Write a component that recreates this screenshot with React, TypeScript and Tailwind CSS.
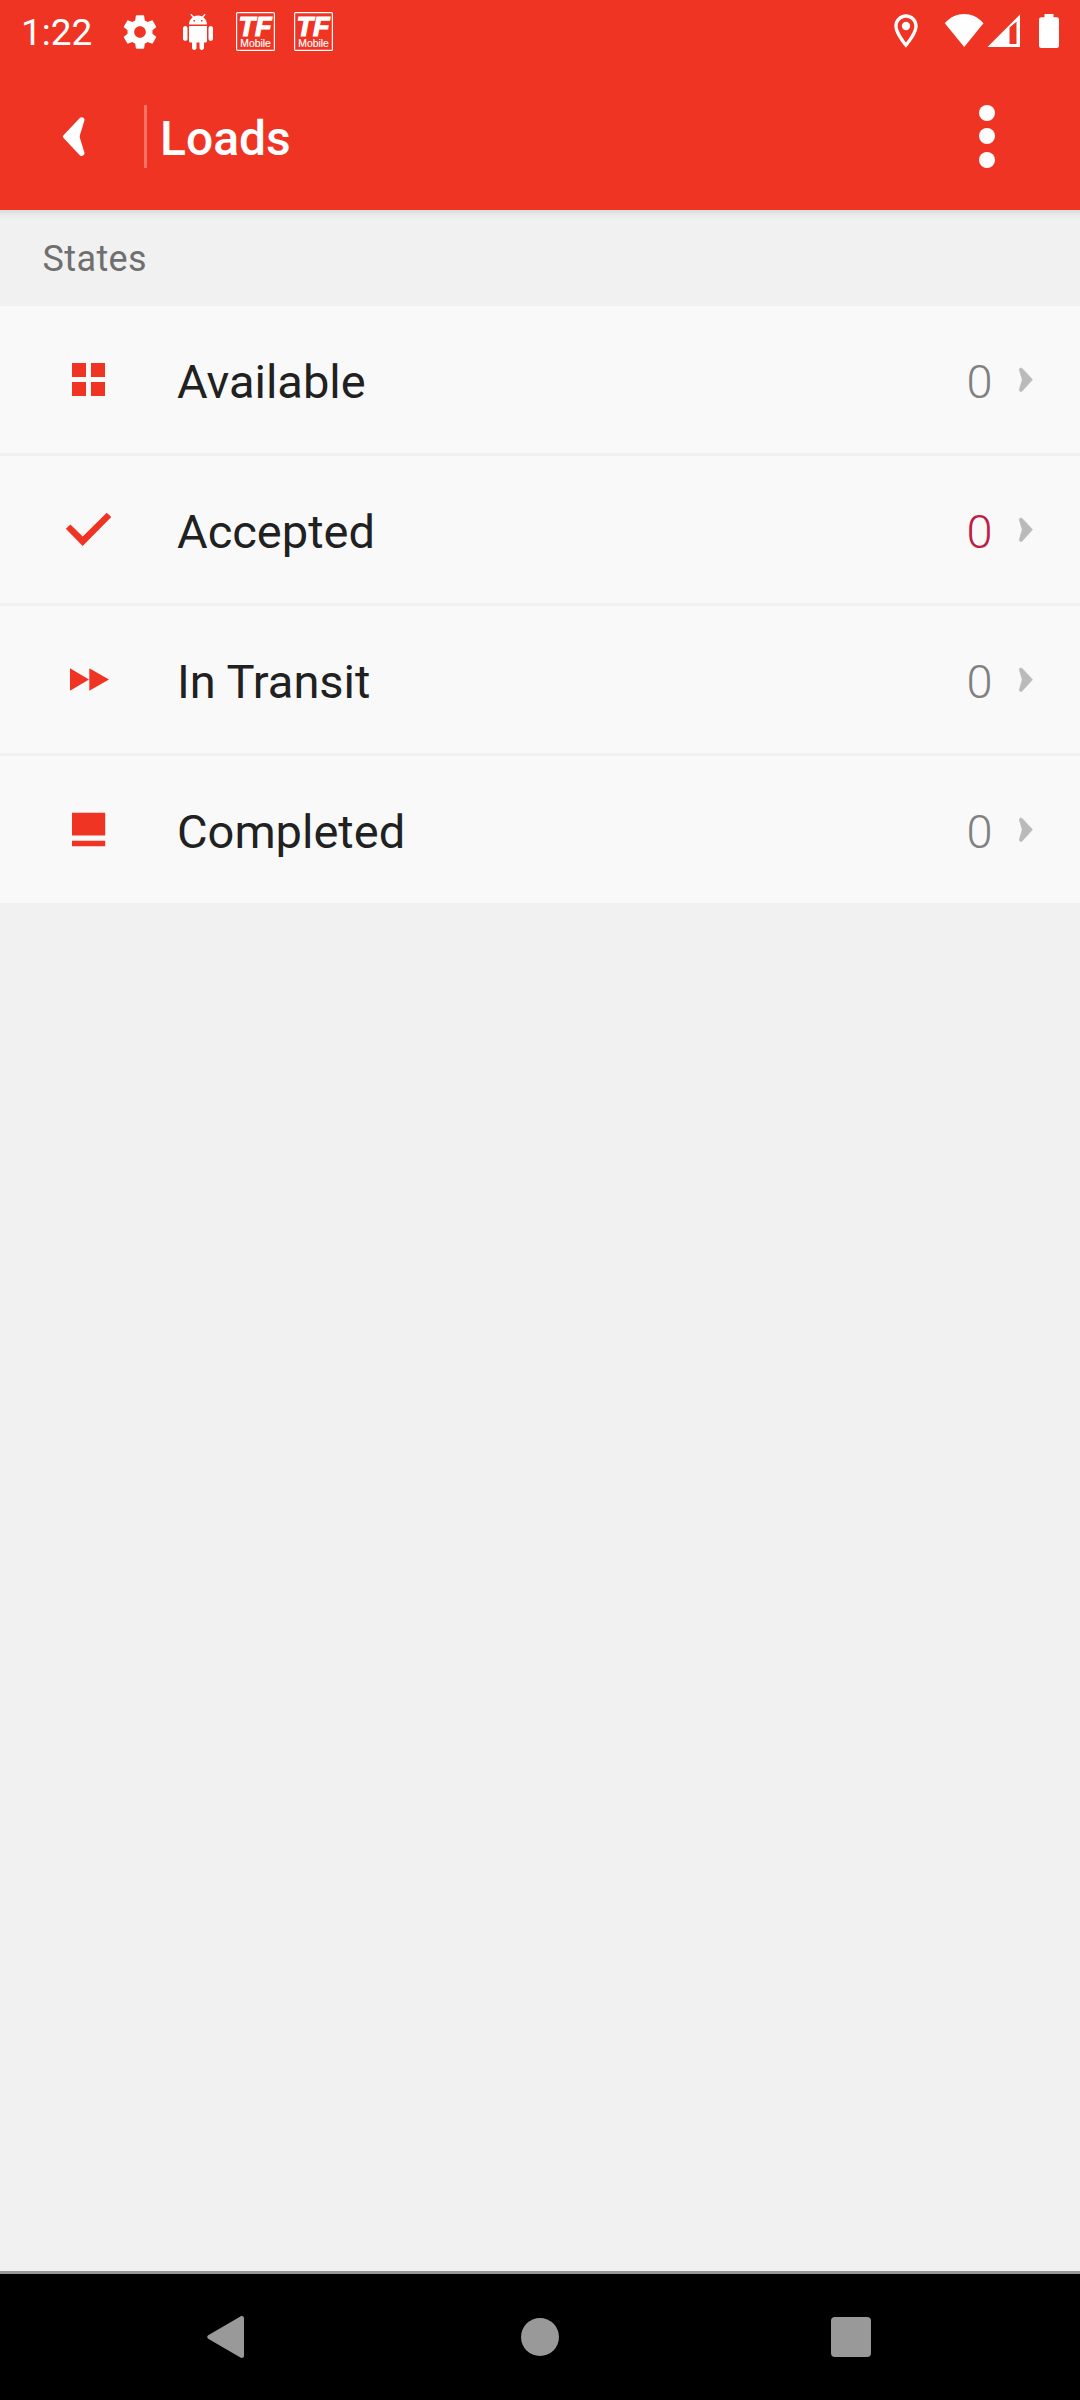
import React from "react";

function StatusBar() {
  return (
    <div className="flex h-[63px] w-full items-start text-white">
      <span className="ml-[21px] mt-[11px] w-[99px] text-[37px] leading-[44px]">1:22</span>
      <svg className="mt-[11.5px] h-[40px] w-[40px] shrink-0" viewBox="0 0 24 24" fill="currentColor">
        <path d="M19.43 12.98c.04-.32.07-.64.07-.98s-.03-.66-.07-.98l2.11-1.65c.19-.15.24-.42.12-.64l-2-3.46c-.12-.22-.39-.3-.61-.22l-2.49 1c-.52-.4-1.08-.73-1.69-.98l-.38-2.65C14.46 2.18 14.25 2 14 2h-4c-.25 0-.46.18-.49.42l-.38 2.65c-.61.25-1.17.59-1.69.98l-2.49-1c-.23-.09-.49 0-.61.22l-2 3.46c-.13.22-.07.49.12.64l2.11 1.65c-.04.32-.07.65-.07.98s.03.66.07.98l-2.11 1.65c-.19.15-.24.42-.12.64l2 3.46c.12.22.39.3.61.22l2.49-1c.52.4 1.08.73 1.69.98l.38 2.65c.03.24.24.42.49.42h4c.25 0 .46-.18.49-.42l.38-2.65c.61-.25 1.17-.59 1.69-.98l2.49 1c.23.09.49 0 .61-.22l2-3.46c.12-.22.07-.49-.12-.64l-2.11-1.65zM12 15.5c-1.93 0-3.5-1.57-3.5-3.5s1.57-3.5 3.5-3.5 3.5 1.57 3.5 3.5-1.57 3.5-3.5 3.5z" />
      </svg>
      <svg className="ml-[20px] mt-[13.5px] h-[36px] w-[36px] shrink-0" viewBox="0 0 24 24" fill="currentColor">
        <path d="M6 18c0 .55.45 1 1 1h1v3.5c0 .83.67 1.5 1.5 1.5s1.5-.67 1.5-1.5V19h2v3.5c0 .83.67 1.5 1.5 1.5s1.5-.67 1.5-1.5V19h1c.55 0 1-.45 1-1V8H6v10zM3.5 8C2.67 8 2 8.67 2 9.5v7c0 .83.67 1.5 1.5 1.5S5 17.33 5 16.5v-7C5 8.67 4.33 8 3.5 8zm17 0c-.83 0-1.5.67-1.5 1.5v7c0 .83.67 1.5 1.5 1.5s1.5-.67 1.5-1.5v-7c0-.83-.67-1.5-1.5-1.5zm-4.97-5.84l1.3-1.3c.2-.2.2-.51 0-.71-.2-.2-.51-.2-.71 0l-1.48 1.48C13.85 1.23 12.95 1 12 1c-.96 0-1.86.23-2.66.63L7.85.15c-.2-.2-.51-.2-.71 0-.2.2-.2.51 0 .71l1.31 1.31C6.97 3.26 6 5.01 6 7h12c0-1.99-.97-3.75-2.47-4.84zM10 5H9V4h1v1zm5 0h-1V4h1v1z" />
      </svg>
      <TfLogo className="ml-[20px]" />
      <TfLogo className="ml-[19px]" />
      <svg className="ml-auto mr-[18px] mt-[11px] h-[40px] w-[40px] shrink-0" viewBox="0 0 24 24" fill="currentColor">
        <path d="M12 2C8.13 2 5 5.13 5 9c0 5.25 7 13 7 13s7-7.75 7-13c0-3.87-3.13-7-7-7zM7 9c0-2.76 2.24-5 5-5s5 2.24 5 5c0 2.88-2.88 7.19-5 9.88C9.92 16.21 7 11.85 7 9z" />
        <circle cx="12" cy="9" r="2.5" />
      </svg>
      <svg className="mr-[3px] mt-[14px] h-[33px] w-[40px] shrink-0" viewBox="0 0 40 33" fill="currentColor">
        <path d="M.8 9.2C6.2 3 13 0 20.2 0s13.800 3 19.300 9.200L20.200 33z" />
      </svg>
      <svg className="mr-[19px] mt-[14px] h-[33px] w-[33px] shrink-0" viewBox="0 0 33 33" fill="currentColor" fillRule="evenodd">
        <path d="M33 .5V33H.5zM22.500 13.500V30h7V7.800z" />
      </svg>
      <svg className="mr-[21px] mt-[14px] h-[34px] w-[20px] shrink-0" viewBox="0 0 20 34" fill="currentColor">
        <path d="M5.500 0h9v3.300h3.200A2.300 2.300 0 0 1 20 5.600v26.100a2.300 2.300 0 0 1-2.300 2.300H2.300A2.300 2.300 0 0 1 0 31.700V5.600a2.300 2.300 0 0 1 2.300-2.300h3.200z" />
      </svg>
    </div>
  );
}

function TfLogo({ className }: { className: string }) {
  return (
    <svg className={`mt-[12px] h-[39px] w-[39px] shrink-0 ${className}`} viewBox="0 0 39 39" fill="white">
      <rect x=".6" y=".6" width="37.800" height="37.800" rx="1" fill="none" stroke="white" strokeWidth="1.200" />
      <text x="2.500" y="24.100" textLength="33" lengthAdjust="spacingAndGlyphs" fontFamily="Liberation Sans" fontWeight="700" fontStyle="italic" fontSize="28" stroke="white" strokeWidth="1.200">TF</text>
      <text x="4.300" y="34.700" textLength="30.500" lengthAdjust="spacingAndGlyphs" fontFamily="Liberation Sans" fontSize="10.500" stroke="white" strokeWidth=".15">Mobile</text>
    </svg>
  );
}

function AppBar() {
  return (
    <div className="flex h-[147px] w-full items-start text-white">
      <svg className="ml-[60px] mt-[52px] h-[44px] w-[28px]" viewBox="0 0 28 44" fill="currentColor">
        <path d="M3.300 20.600 20 2.800C21.500 1.200 25.200 3 24.400 5.600L20 20a5 5 0 0 0 0 3.200l4.400 14.400c.8 2.600-2.900 4.400-4.400 2.800L3.300 22.700a1.500 1.500 0 0 1 0-2.100z" />
      </svg>
      <div className="ml-[56px] mt-[42px] h-[63px] w-[3px] bg-white/30" />
      <h1 className="ml-[13px] mt-[48px] text-[48px] leading-[56px] font-medium">Loads</h1>
      <div className="ml-auto mr-[84.700px] mt-[41.700px] flex flex-col gap-[7.700px]">
        <div className="size-[16px] rounded-full bg-white" />
        <div className="size-[16px] rounded-full bg-white" />
        <div className="size-[16px] rounded-full bg-white" />
      </div>
    </div>
  );
}

const rows = [
  {
    label: "Available",
    color: "text-[#808080]",
    icon: <path d="M14 14h14v14H14zM33 14h14v14H33zM14 33h14v14H14zM33 33h14v14H33z" />,
  },
  {
    label: "Accepted",
    color: "text-[#bf1e46]",
    icon: <path d="M7.800 29.800 12.400 25.400 24.700 37.400 48.700 13.800 53.300 18 24.700 47z" />,
  },
  {
    label: "In Transit",
    color: "text-[#808080]",
    icon: <path d="M12 19.300 31 30.500 12 41.700zM31.300 19.300 51 30.500 31.300 41.700z" />,
  },
  {
    label: "Completed",
    color: "text-[#808080]",
    icon: <path d="M14 13.800h33.200v22.700H14zM14 41.800h33.200v5.400H14z" />,
  },
];

export default function App() {
  return (
    <div className="flex h-[2400px] w-[1080px] flex-col bg-[#f1f1f1] font-['Roboto',sans-serif]">
      <header className="h-[210px] w-full shrink-0 bg-[#ef3424]">
        <StatusBar />
        <AppBar />
      </header>
      <div className="h-[96px] w-full shrink-0 bg-linear-to-b from-[#d9dbdb] via-[#e8eae9] via-[5px] to-[#f1f1f1] to-[10px]">
        <h2 className="pl-[42.500px] pt-[28px] text-[36px] leading-[42px] tracking-[.4px] text-[#6f6f6f]">States</h2>
      </div>
      <main className="flex flex-col gap-[3px]">
        {rows.map((r) => (
          <div key={r.label} className="flex h-[147px] items-center bg-[#f9f9f9] pl-[58px] pr-[45px]">
            <svg className="h-[61px] w-[61px]" viewBox="0 0 61 61" fill="#ef3424">
              {r.icon}
            </svg>
            <span className="ml-[58px] mt-[5px] text-[47px] leading-[56px] text-[#212121]">{r.label}</span>
            <span className={`ml-auto mt-[5px] text-[47px] leading-[56px] font-light ${r.color}`}>0</span>
            <svg className="ml-[25.500px] h-[27px] w-[17px]" viewBox="0 0 17 27" fill="#bababa" stroke="#bababa" strokeWidth=".6">
              <path d="M14 12.900 4.200 2.500C3 1.300.800 2.300 1.400 4.200l2.500 8.300c.3.800.3 1.600 0 2.400l-2.500 8.300c-.6 1.900 1.600 3 2.800 1.800l9.800-10.700a1 1 0 0 0 0-1.400z" />
            </svg>
          </div>
        ))}
      </main>
      <nav className="mt-auto flex h-[129px] w-full shrink-0 items-center border-t-[3px] border-[#999] bg-black pl-[206px] text-[#999]">
        <svg className="mr-[276px] h-[44px] w-[39px]" viewBox="0 0 39 44" fill="currentColor">
          <path d="M2.200 20.300 34.400 1.400c1.600-.9 3.600 0 3.600 1.900v37.400c0 1.900-2 2.800-3.600 1.900L2.200 23.700a2 2 0 0 1 0-3.400z" />
        </svg>
        <div className="size-[38px] rounded-full bg-current" />
        <div className="ml-[272px] size-[40px] rounded-[4px] bg-current" />
      </nav>
    </div>
  );
}
